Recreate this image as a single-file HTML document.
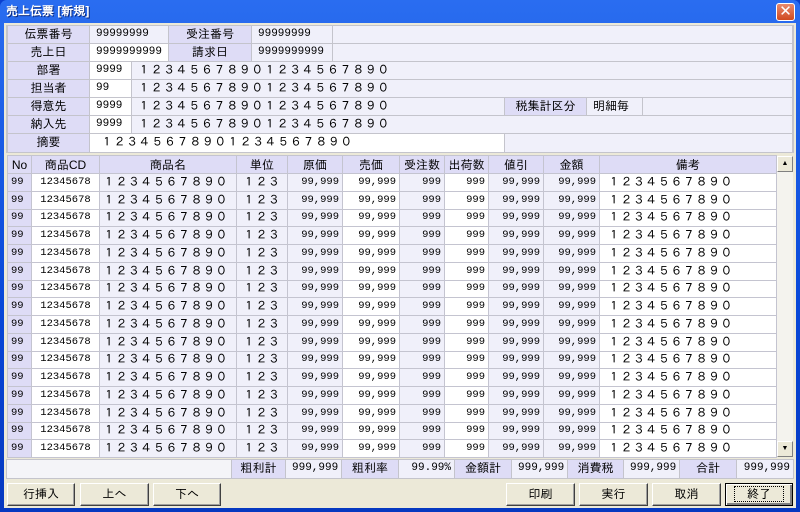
<!DOCTYPE html>
<html><head><meta charset="utf-8"><style>
*{margin:0;padding:0;box-sizing:border-box}
body{width:800px;height:512px;overflow:hidden;background:#0a3fd0;font-family:"Liberation Sans","IPAGothic","Noto Sans CJK JP",sans-serif;font-size:12px;color:#000;position:relative}
.win{position:absolute;left:0;top:0;width:800px;height:512px;background:linear-gradient(#2a6df0,#0848d8 60%,#0638c0);border-radius:7px 7px 0 0}
.title{position:absolute;left:6px;top:4px;color:#fff;font-weight:bold;font-size:12px;text-shadow:1px 1px #0a2a80}
.close{position:absolute;left:776px;top:3px;width:19px;height:18px;background:linear-gradient(#e88a70,#d04a20);border:1px solid #fff;border-radius:3px;color:#fff;font-weight:bold;font-size:15px;line-height:15px;text-align:center;font-family:"DejaVu Sans",sans-serif}
.client{position:absolute;left:4px;top:23px;width:792px;height:485px;background:#ece9d8}
.c{position:absolute;height:17px;line-height:17px;white-space:nowrap;overflow:hidden}
.L{background:#dedcf6;text-align:center}
.V{background:#f0f0fa;padding-left:6px}
.W{background:#fff;padding-left:6px}
.n{font-family:"Liberation Mono","IPAGothic",monospace;font-size:10px}
.fw{letter-spacing:0.6px}
.panel{position:absolute;left:6px;top:25px;width:788px;height:128px;background:#c4c4cc;border:1px solid #c4c4cc}
table{position:absolute;left:7px;top:155px;border-collapse:separate;border-spacing:1px;background:#c4c4d0;table-layout:fixed}
td{height:16.75px;line-height:15px;padding:0 3px;white-space:nowrap;overflow:hidden}
td.n{font-size:10.5px}
td.fw{letter-spacing:0.5px}
th{height:17px;font-weight:normal;background:#dedcf6;line-height:16px}
td.r{text-align:right}
.a{background:#dedcf6}.w{background:#fff}.v{background:#f0f0fa}
.sb{position:absolute;left:777px;top:156px;width:16px;height:301px;background:#f4f3ee}
.sbt{position:absolute;left:777px;width:16px;height:16px;background:#ece9d8;border:1px solid;border-color:#fff #808080 #808080 #fff;font-size:7px;text-align:center;line-height:14px}
.btn{position:absolute;top:483px;height:23px;background:#ece9d8;border:1px solid;border-color:#fff #404040 #404040 #fff;box-shadow:inset -1px -1px #a0a0a0;text-align:center;line-height:21px;font-size:12px}
</style></head><body>
<div class="win"></div>
<div class="title">売上伝票 [新規]</div>
<div class="close">✕</div>
<div class="client"></div>
<div class="panel"></div>
<div class="c L" style="left:8px;top:26px;width:81px">伝票番号</div>
<div class="c V n" style="left:90px;top:26px;width:78px;font-size:11px">99999999</div>
<div class="c L" style="left:169px;top:26px;width:82px">受注番号</div>
<div class="c V n" style="left:252px;top:26px;width:80px;font-size:11px">99999999</div>
<div class="c V" style="left:333px;top:26px;width:459px"></div>
<div class="c L" style="left:8px;top:44px;width:81px">売上日</div>
<div class="c W n" style="left:90px;top:44px;width:78px;font-size:11px">9999999999</div>
<div class="c L" style="left:169px;top:44px;width:82px">請求日</div>
<div class="c V n" style="left:252px;top:44px;width:80px;font-size:11px">9999999999</div>
<div class="c V" style="left:333px;top:44px;width:459px"></div>
<div class="c L" style="left:8px;top:62px;width:81px">部署</div>
<div class="c W n" style="left:90px;top:62px;width:41px;font-size:11px">9999</div>
<div class="c V fw" style="left:132px;top:62px;width:660px">１２３４５６７８９０１２３４５６７８９０</div>
<div class="c L" style="left:8px;top:80px;width:81px">担当者</div>
<div class="c W n" style="left:90px;top:80px;width:41px;font-size:11px">99</div>
<div class="c V fw" style="left:132px;top:80px;width:660px">１２３４５６７８９０１２３４５６７８９０</div>
<div class="c L" style="left:8px;top:98px;width:81px">得意先</div>
<div class="c W n" style="left:90px;top:98px;width:41px;font-size:11px">9999</div>
<div class="c V fw" style="left:132px;top:98px;width:372px">１２３４５６７８９０１２３４５６７８９０</div>
<div class="c L" style="left:505px;top:98px;width:81px">税集計区分</div>
<div class="c V" style="left:587px;top:98px;width:55px">明細毎</div>
<div class="c V" style="left:643px;top:98px;width:149px"></div>
<div class="c L" style="left:8px;top:116px;width:81px">納入先</div>
<div class="c W n" style="left:90px;top:116px;width:41px;font-size:11px">9999</div>
<div class="c V fw" style="left:132px;top:116px;width:660px">１２３４５６７８９０１２３４５６７８９０</div>
<div class="c L" style="left:8px;top:134px;width:81px;height:18px">摘要</div>
<div class="c W fw" style="left:90px;top:134px;width:414px;height:18px;padding-left:11px">１２３４５６７８９０１２３４５６７８９０</div>
<div class="c V" style="left:505px;top:134px;width:287px;height:18px"></div>

<table>
<colgroup><col style="width:23px"><col style="width:67px"><col style="width:136px"><col style="width:50px"><col style="width:54px"><col style="width:56px"><col style="width:44px"><col style="width:43px"><col style="width:54px"><col style="width:55px"><col style="width:176px"></colgroup>
<tr><th>No</th><th>商品CD</th><th>商品名</th><th>単位</th><th>原価</th><th>売価</th><th>受注数</th><th>出荷数</th><th>値引</th><th>金額</th><th>備考</th></tr>
<tr><td class="a n">99</td><td class="w n" style="text-align:center">12345678</td><td class="v fw">１２３４５６７８９０</td><td class="v fw" style="padding-left:6px">１２３</td><td class="v r n">99,999</td><td class="w r n">99,999</td><td class="v r n">999</td><td class="w r n">999</td><td class="v r n">99,999</td><td class="v r n">99,999</td><td class="w fw" style="padding-left:8px">１２３４５６７８９０</td></tr>
<tr><td class="a n">99</td><td class="w n" style="text-align:center">12345678</td><td class="v fw">１２３４５６７８９０</td><td class="v fw" style="padding-left:6px">１２３</td><td class="v r n">99,999</td><td class="w r n">99,999</td><td class="v r n">999</td><td class="w r n">999</td><td class="v r n">99,999</td><td class="v r n">99,999</td><td class="w fw" style="padding-left:8px">１２３４５６７８９０</td></tr>
<tr><td class="a n">99</td><td class="w n" style="text-align:center">12345678</td><td class="v fw">１２３４５６７８９０</td><td class="v fw" style="padding-left:6px">１２３</td><td class="v r n">99,999</td><td class="w r n">99,999</td><td class="v r n">999</td><td class="w r n">999</td><td class="v r n">99,999</td><td class="v r n">99,999</td><td class="w fw" style="padding-left:8px">１２３４５６７８９０</td></tr>
<tr><td class="a n">99</td><td class="w n" style="text-align:center">12345678</td><td class="v fw">１２３４５６７８９０</td><td class="v fw" style="padding-left:6px">１２３</td><td class="v r n">99,999</td><td class="w r n">99,999</td><td class="v r n">999</td><td class="w r n">999</td><td class="v r n">99,999</td><td class="v r n">99,999</td><td class="w fw" style="padding-left:8px">１２３４５６７８９０</td></tr>
<tr><td class="a n">99</td><td class="w n" style="text-align:center">12345678</td><td class="v fw">１２３４５６７８９０</td><td class="v fw" style="padding-left:6px">１２３</td><td class="v r n">99,999</td><td class="w r n">99,999</td><td class="v r n">999</td><td class="w r n">999</td><td class="v r n">99,999</td><td class="v r n">99,999</td><td class="w fw" style="padding-left:8px">１２３４５６７８９０</td></tr>
<tr><td class="a n">99</td><td class="w n" style="text-align:center">12345678</td><td class="v fw">１２３４５６７８９０</td><td class="v fw" style="padding-left:6px">１２３</td><td class="v r n">99,999</td><td class="w r n">99,999</td><td class="v r n">999</td><td class="w r n">999</td><td class="v r n">99,999</td><td class="v r n">99,999</td><td class="w fw" style="padding-left:8px">１２３４５６７８９０</td></tr>
<tr><td class="a n">99</td><td class="w n" style="text-align:center">12345678</td><td class="v fw">１２３４５６７８９０</td><td class="v fw" style="padding-left:6px">１２３</td><td class="v r n">99,999</td><td class="w r n">99,999</td><td class="v r n">999</td><td class="w r n">999</td><td class="v r n">99,999</td><td class="v r n">99,999</td><td class="w fw" style="padding-left:8px">１２３４５６７８９０</td></tr>
<tr><td class="a n">99</td><td class="w n" style="text-align:center">12345678</td><td class="v fw">１２３４５６７８９０</td><td class="v fw" style="padding-left:6px">１２３</td><td class="v r n">99,999</td><td class="w r n">99,999</td><td class="v r n">999</td><td class="w r n">999</td><td class="v r n">99,999</td><td class="v r n">99,999</td><td class="w fw" style="padding-left:8px">１２３４５６７８９０</td></tr>
<tr><td class="a n">99</td><td class="w n" style="text-align:center">12345678</td><td class="v fw">１２３４５６７８９０</td><td class="v fw" style="padding-left:6px">１２３</td><td class="v r n">99,999</td><td class="w r n">99,999</td><td class="v r n">999</td><td class="w r n">999</td><td class="v r n">99,999</td><td class="v r n">99,999</td><td class="w fw" style="padding-left:8px">１２３４５６７８９０</td></tr>
<tr><td class="a n">99</td><td class="w n" style="text-align:center">12345678</td><td class="v fw">１２３４５６７８９０</td><td class="v fw" style="padding-left:6px">１２３</td><td class="v r n">99,999</td><td class="w r n">99,999</td><td class="v r n">999</td><td class="w r n">999</td><td class="v r n">99,999</td><td class="v r n">99,999</td><td class="w fw" style="padding-left:8px">１２３４５６７８９０</td></tr>
<tr><td class="a n">99</td><td class="w n" style="text-align:center">12345678</td><td class="v fw">１２３４５６７８９０</td><td class="v fw" style="padding-left:6px">１２３</td><td class="v r n">99,999</td><td class="w r n">99,999</td><td class="v r n">999</td><td class="w r n">999</td><td class="v r n">99,999</td><td class="v r n">99,999</td><td class="w fw" style="padding-left:8px">１２３４５６７８９０</td></tr>
<tr><td class="a n">99</td><td class="w n" style="text-align:center">12345678</td><td class="v fw">１２３４５６７８９０</td><td class="v fw" style="padding-left:6px">１２３</td><td class="v r n">99,999</td><td class="w r n">99,999</td><td class="v r n">999</td><td class="w r n">999</td><td class="v r n">99,999</td><td class="v r n">99,999</td><td class="w fw" style="padding-left:8px">１２３４５６７８９０</td></tr>
<tr><td class="a n">99</td><td class="w n" style="text-align:center">12345678</td><td class="v fw">１２３４５６７８９０</td><td class="v fw" style="padding-left:6px">１２３</td><td class="v r n">99,999</td><td class="w r n">99,999</td><td class="v r n">999</td><td class="w r n">999</td><td class="v r n">99,999</td><td class="v r n">99,999</td><td class="w fw" style="padding-left:8px">１２３４５６７８９０</td></tr>
<tr><td class="a n">99</td><td class="w n" style="text-align:center">12345678</td><td class="v fw">１２３４５６７８９０</td><td class="v fw" style="padding-left:6px">１２３</td><td class="v r n">99,999</td><td class="w r n">99,999</td><td class="v r n">999</td><td class="w r n">999</td><td class="v r n">99,999</td><td class="v r n">99,999</td><td class="w fw" style="padding-left:8px">１２３４５６７８９０</td></tr>
<tr><td class="a n">99</td><td class="w n" style="text-align:center">12345678</td><td class="v fw">１２３４５６７８９０</td><td class="v fw" style="padding-left:6px">１２３</td><td class="v r n">99,999</td><td class="w r n">99,999</td><td class="v r n">999</td><td class="w r n">999</td><td class="v r n">99,999</td><td class="v r n">99,999</td><td class="w fw" style="padding-left:8px">１２３４５６７８９０</td></tr>
<tr><td class="a n">99</td><td class="w n" style="text-align:center">12345678</td><td class="v fw">１２３４５６７８９０</td><td class="v fw" style="padding-left:6px">１２３</td><td class="v r n">99,999</td><td class="w r n">99,999</td><td class="v r n">999</td><td class="w r n">999</td><td class="v r n">99,999</td><td class="v r n">99,999</td><td class="w fw" style="padding-left:8px">１２３４５６７８９０</td></tr>
</table>
<div class="sb"></div>
<div class="sbt" style="top:156px">▲</div>
<div class="sbt" style="top:441px">▼</div>

<div class="c" style="left:6px;top:459px;width:788px;height:20px;background:#c4c4cc"></div>
<div class="c" style="left:7px;top:460px;width:224px;height:18px;background:#f4f4f8"></div>
<div class="c L" style="left:232px;top:460px;width:53px;height:18px">粗利計</div>
<div class="c V n" style="left:286px;top:460px;width:55px;height:18px;text-align:right;padding-right:3px;font-size:11px">999,999</div>
<div class="c L" style="left:342px;top:460px;width:56px;height:18px">粗利率</div>
<div class="c V n" style="left:399px;top:460px;width:55px;height:18px;text-align:right;padding-right:3px;font-size:11px">99.99%</div>
<div class="c L" style="left:455px;top:460px;width:56px;height:18px">金額計</div>
<div class="c V n" style="left:512px;top:460px;width:55px;height:18px;text-align:right;padding-right:3px;font-size:11px">999,999</div>
<div class="c L" style="left:568px;top:460px;width:55px;height:18px">消費税</div>
<div class="c V n" style="left:624px;top:460px;width:55px;height:18px;text-align:right;padding-right:3px;font-size:11px">999,999</div>
<div class="c L" style="left:680px;top:460px;width:56px;height:18px">合計</div>
<div class="c V n" style="left:737px;top:460px;width:56px;height:18px;text-align:right;padding-right:3px;font-size:11px">999,999</div>

<div class="btn" style="left:7px;width:68px">行挿入</div>
<div class="btn" style="left:80px;width:69px">上へ</div>
<div class="btn" style="left:153px;width:68px">下へ</div>
<div class="btn" style="left:506px;width:69px">印刷</div>
<div class="btn" style="left:579px;width:69px">実行</div>
<div class="btn" style="left:652px;width:69px">取消</div>
<div class="btn" style="left:725px;width:68px;border:1px solid #000;box-shadow:inset 1px 1px #fff,inset -2px -2px #808080"><span style="outline:1px dotted #000;padding:0 12px">終了</span></div>
</body></html>
